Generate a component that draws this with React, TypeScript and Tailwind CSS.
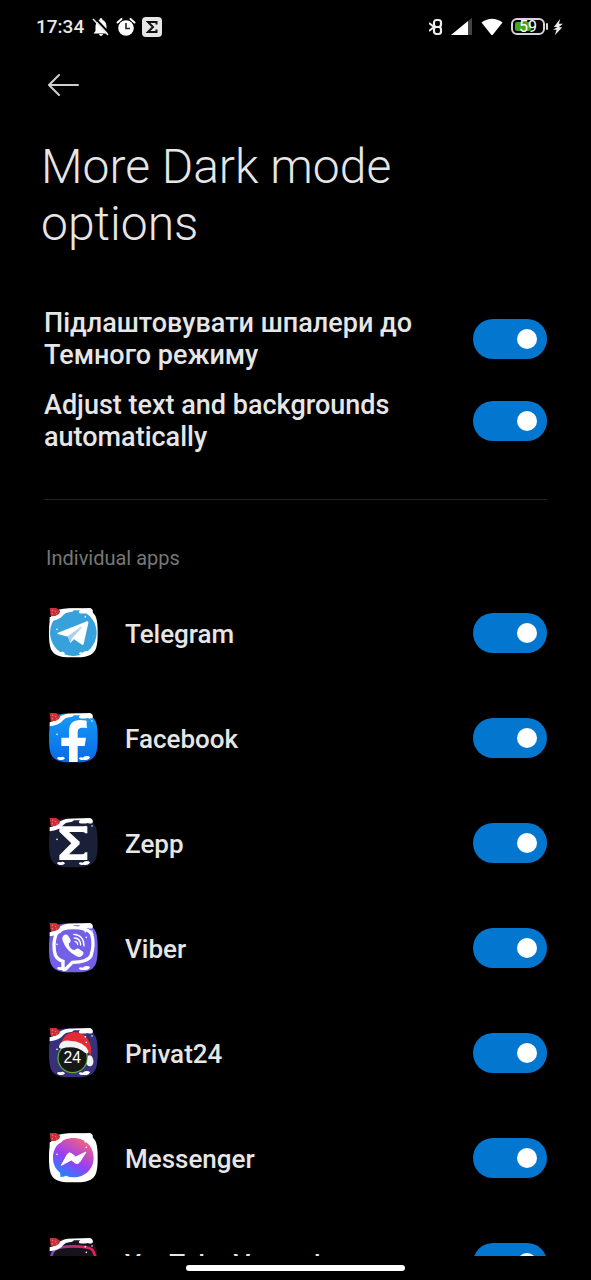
import type { ReactNode } from 'react';

type AppEntry = { id: string; name: string; art: ReactNode };

const SQUIRCLE =
  'M27 98 C27 38 38 25 100 25 C162 25 173 38 173 98 C173 160 162 172 100 172 C38 172 27 160 27 98 Z';

function Switch({ id }: { id: string }) {
  return (
    <input
      id={id}
      type="checkbox"
      role="switch"
      defaultChecked
      className="flex h-10 w-[74px] shrink-0 cursor-pointer appearance-none items-center rounded-full bg-[#333] px-[10px] before:block before:size-5 before:rounded-full before:bg-white before:content-[''] checked:justify-end checked:bg-[#0377d0]"
    />
  );
}

/* Festive snow and berries laid over every launcher icon. */
function Snow() {
  return (
    <g>
      <path
        d="M29 52 C42 48 50 44 56 38 C62 31 72 28 84 26 L150 24 Q161 28 158 38 Q150 43 144 39 Q132 42 119 40 Q113 35 121 31 L102 31 Q98 37 88 37 Q76 38 70 45 C62 56 48 62 29 64 Z"
        fill="#fff"
      />
      <path d="M29 23 L47 23 L61 33 L57 42 L46 48 L32 49 Z" fill="#c9303a" />
      <g fill="#f0858a">
        <circle cx="38" cy="31" r="2" />
        <circle cx="47" cy="34" r="2" />
        <circle cx="37" cy="41" r="2" />
        <circle cx="50" cy="41" r="1.5" />
      </g>
      <path d="M51 160 Q54 154 61 157 Q69 153 75 160 Q72 166 62 165 Q54 166 51 160 Z" fill="#fff" />
      <path d="M116 160 Q121 155 128 158 Q134 151 146 154 Q153 156 147 161 Q140 167 130 164 Q120 167 116 160 Z" fill="#fff" />
      <g fill="#fff">
        <circle cx="136" cy="50" r="2.5" />
        <circle cx="156" cy="48" r="2.5" />
        <circle cx="139" cy="67" r="2.5" />
        <circle cx="51" cy="88" r="2.5" />
      </g>
    </g>
  );
}

const apps: AppEntry[] = [
  {
    id: 'telegram',
    name: 'Telegram',
    art: (
      <>
        <path d={SQUIRCLE} fill="#fff" />
        <circle cx="100" cy="98" r="70" fill="#37a1dc" />
        <path d="M52 99 L141 64 Q146 63 145 69 L131 132 Q129 137 124 133 L102 118 L91 129 L84 110 L53 102 Z" fill="#fff" />
        <path d="M84 110 L91 129 L96 115 L128 80 Z" fill="#a9cfe9" />
        <path d="M84 110 L124 80" stroke="#7cbfe6" strokeWidth="2" />
      </>
    ),
  },
  {
    id: 'facebook',
    name: 'Facebook',
    art: (
      <>
        <path d={SQUIRCLE} fill="url(#facebook-fill)" />
        <path d="M87 171 L87 123 L64 123 L64 98 L87 98 L87 80 C87 55 99 45 121 45 Q132 45 140 47 L140 68 L128 68 C117 68 113 73 113 82 L113 98 L138 98 L134 123 L113 123 L113 171 Z" fill="#fff" />
      </>
    ),
  },
  {
    id: 'zepp',
    name: 'Zepp',
    art: (
      <>
        <path d={SQUIRCLE} fill="#192038" />
        <path d="M58 49 L142 49 L142 70 L135 70 Q134 66 127 66 L87 66 L119 95 L119 103 L87 133 L127 133 Q134 133 135 127 L142 127 L142 150 L58 150 L58 136 L94 100 L58 65 Z" fill="#fff" />
      </>
    ),
  },
  {
    id: 'viber',
    name: 'Viber',
    art: (
      <>
        <path d={SQUIRCLE} fill="#7360e8" />
        <path d="M48 58 Q58 38 100 38 Q143 38 155 57 Q164 89 153 122 Q143 141 97 142 L76 163 Q70 166 69 159 L69 139 Q52 134 46 120 Q37 88 48 58 Z" fill="none" stroke="#fff" strokeWidth="10" />
        <path d="M70 62 Q79 55 85 63 L92 75 Q93 81 86 86 Q88 101 104 106 Q109 98 116 101 L130 111 Q133 117 125 123 Q119 129 110 124 Q79 108 68 77 Q65 67 70 62 Z" fill="#fff" />
        <g fill="none" stroke="#fff" strokeWidth="4" strokeLinecap="round">
          <path d="M101 58 Q132 60 132 93" />
          <path d="M103 69 Q121 70 122 90" />
          <path d="M105 79 Q112 80 113 88" />
        </g>
      </>
    ),
  },
  {
    id: 'privat24',
    name: 'Privat24',
    art: (
      <>
        <path d={SQUIRCLE} fill="#37307a" />
        <circle cx="98" cy="114" r="44" fill="#151817" stroke="#5cae36" strokeWidth="4" />
        <path d="M65 70 Q70 38 103 36 Q143 37 153 82 L154 105 L133 90 Z" fill="#e32b32" />
        <path d="M58 76 Q64 60 88 62 Q131 63 145 92 Q146 104 135 98 Q105 73 64 86 Q54 86 58 76 Z" fill="#f3f3f6" />
        <path d="M144 107 Q155 103 159 117 Q163 131 155 137 Q145 143 140 132 Z" fill="#f3f3f6" />
        <text x="97" y="130" textAnchor="middle" fill="#fff" fontFamily="Liberation Sans, sans-serif" fontSize="47">
          24
        </text>
      </>
    ),
  },
  {
    id: 'messenger',
    name: 'Messenger',
    art: (
      <>
        <path d={SQUIRCLE} fill="#fff" />
        <path d="M100 39 C64 39 39 65 39 98 C39 118 47 132 60 143 L62 158 L78 152 Q88 157 100 157 C136 157 161 131 161 98 C161 65 136 39 100 39 Z" fill="url(#messenger-fill)" />
        <path d="M64 121 L82 88 Q87 80 95 86 L107 96 L138 81 L119 111 Q113 119 106 114 L94 105 Z" fill="#fff" stroke="#fff" strokeWidth="3" strokeLinejoin="round" />
      </>
    ),
  },
  {
    id: 'youtube-vanced',
    name: 'YouTube Vanced',
    art: (
      <>
        <path d={SQUIRCLE} fill="#16131d" />
        <path d="M31 110 C31 55 44 49 100 49 C156 49 168 52 168 110" fill="none" stroke="url(#vanced-fill)" strokeWidth="8" />
      </>
    ),
  },
];

function StatusBar() {
  return (
    <header className="flex h-[54px] shrink-0 items-center justify-between pr-7 pl-9 text-[#e8e8e8]">
      <div className="flex items-center gap-2">
        <time className="text-[19px] leading-6 font-medium">17:34</time>
        <div className="flex items-center gap-[6px]">
          <svg aria-label="Muted" className="h-5 w-[18px]" viewBox="0 0 18 20">
            <path d="M9 1 Q10.500 1 10.500 3 Q14 4 14.500 9 L14.500 14 L16.500 16.500 L1.500 16.500 L3.500 14 L3.500 9 Q4 4 7.500 3 Q7.500 1 9 1 Z M7 17 H11 Q10.500 19 9 19 Q7.500 19 7 17 Z" fill="#fff" />
            <path d="M2 0 L18 17" stroke="#000" strokeWidth="2" />
            <path d="M1 2 L16 18" stroke="#e8e8e8" strokeWidth="1.500" />
          </svg>
          <svg aria-label="Alarm" className="h-5 w-5" viewBox="0 0 20 20">
            <circle cx="10" cy="11" r="7.800" fill="#fff" />
            <path d="M1.500 5.500 L5.500 2 M18.500 5.500 L14.500 2" stroke="#fff" strokeWidth="2" strokeLinecap="round" />
            <path d="M10 6 V11.500 H14" fill="none" stroke="#222" strokeWidth="1.600" />
          </svg>
          <svg aria-label="Zepp" className="h-5 w-5" viewBox="0 0 20 20">
            <rect width="20" height="20" rx="4" fill="#e6e6e6" />
            <path d="M14.500 7.500 V5 H6 L11 10 L6 15 H14.500 V12.500" fill="none" stroke="#111" strokeWidth="2" />
          </svg>
        </div>
      </div>
      <div className="flex items-center">
        <svg aria-label="Bluetooth" className="mr-2 h-[18px] w-[14px]" viewBox="0 0 14 18">
          <path d="M0 5 L5 9 L0 13" fill="none" stroke="#eee" strokeWidth="2" />
          <rect x="5" y="2" width="7" height="7" rx="2.500" fill="none" stroke="#eee" strokeWidth="2.200" />
          <rect x="5" y="9" width="7" height="7" rx="2.500" fill="none" stroke="#eee" strokeWidth="2.200" />
        </svg>
        <svg aria-label="Signal" className="mr-[9px] h-[18px] w-[21px]" viewBox="0 0 21 18">
          <path d="M17 3 L21 0 V17 H17 Z" fill="#444" />
          <path d="M0 17 L17 3 V17 Z" fill="#fff" />
        </svg>
        <svg aria-label="Wi-Fi" className="mr-2 h-[18px] w-[22px]" viewBox="0 0 22 18">
          <path d="M0.500 4.500 Q11 -3 21.500 4.500 L12 16.500 Q11 17.500 10 16.500 Z" fill="#fff" />
        </svg>
        <svg aria-label="Battery" className="mr-1 h-5 w-[38px]" viewBox="0 0 38 20">
          <rect x="1" y="2" width="32" height="15" rx="5" fill="none" stroke="#d8d3dc" strokeWidth="2" />
          <rect x="4" y="5" width="16" height="9" rx="2" fill="#46a51b" />
          <path d="M36 7 V12" stroke="#d8d3dc" strokeWidth="2" strokeLinecap="round" />
          <text x="17" y="15" textAnchor="middle" fill="#fff" fontFamily="Roboto, sans-serif" fontSize="16">
            59
          </text>
        </svg>
        <svg aria-label="Charging" className="h-[18px] w-[10px]" viewBox="0 0 11 18">
          <path d="M8 0 L1 9 H5 L0 12 L4 12 L2 18 L10 9.500 L6.500 9 L11 5.500 H6.500 Z" fill="#eee" />
        </svg>
      </div>
    </header>
  );
}

export default function App() {
  return (
    <div className="flex h-screen flex-col overflow-hidden bg-black font-[Roboto,'Noto_Sans',sans-serif] text-[#e6e6e6]">
      <svg className="absolute size-0" aria-hidden="true">
        <defs>
          <linearGradient id="facebook-fill" x1="0" y1="0" x2="0" y2="1">
            <stop stopColor="#169cf6" />
            <stop offset="1" stopColor="#0869e6" />
          </linearGradient>
          <linearGradient id="messenger-fill" x1="0.2" y1="1" x2="0.8" y2="0">
            <stop stopColor="#168cff" />
            <stop offset="0.45" stopColor="#9a3df5" />
            <stop offset="1" stopColor="#fb6573" />
          </linearGradient>
          <linearGradient id="vanced-fill">
            <stop stopColor="#6a52c0" />
            <stop offset="0.4" stopColor="#b0337e" />
            <stop offset="1" stopColor="#ee1a4a" />
          </linearGradient>
        </defs>
      </svg>
      <StatusBar />
      <main className="flex min-h-0 flex-1 flex-col overflow-hidden px-11">
        <button type="button" aria-label="Back" className="mt-[19px] ml-1 h-6 w-8 shrink-0 cursor-pointer">
          <svg className="h-6 w-8" viewBox="0 0 32 24" fill="none" stroke="#d2cdd0" strokeWidth="2" strokeLinecap="round">
            <path d="M30 12 H1 M11 2 L1 12 L11 22" />
          </svg>
        </button>
        <h1 className="mt-[41px] -ml-[3px] max-w-[400px] shrink-0 text-[48px] leading-[57px] font-light">
          More Dark mode options
        </h1>
        <section className="mt-[55px] flex shrink-0 flex-col gap-[18px] border-b border-[#222] pb-[46px]">
          <div className="flex items-center justify-between gap-4">
            <label htmlFor="wallpaper" className="max-w-[400px] text-[27px] leading-8 font-medium">
              Підлаштовувати шпалери до Темного режиму
            </label>
            <Switch id="wallpaper" />
          </div>
          <div className="flex items-center justify-between gap-4">
            <label htmlFor="contrast" className="max-w-[400px] text-[27px] leading-8 font-medium">
              Adjust text and backgrounds automatically
            </label>
            <Switch id="contrast" />
          </div>
        </section>
        <section className="shrink-0">
          <h2 className="mt-[46px] pl-[2px] text-[20px] leading-6 text-[#777]">Individual apps</h2>
          <ul className="mt-[38px] flex flex-col gap-[55px]">
            {apps.map((app) => (
              <li key={app.id} className="flex items-center pl-1">
                <svg className="size-[50px] shrink-0" viewBox="24 24 150 150" aria-hidden="true">
                  {app.art}
                  <Snow />
                </svg>
                <label htmlFor={app.id} className="ml-[27px] flex-1 pt-[2px] text-[26px] leading-8 font-medium">
                  {app.name}
                </label>
                <Switch id={app.id} />
              </li>
            ))}
          </ul>
        </section>
      </main>
      <footer className="flex h-6 shrink-0 items-center justify-center">
        <div className="h-[6px] w-[37%] rounded-full bg-white" />
      </footer>
    </div>
  );
}
